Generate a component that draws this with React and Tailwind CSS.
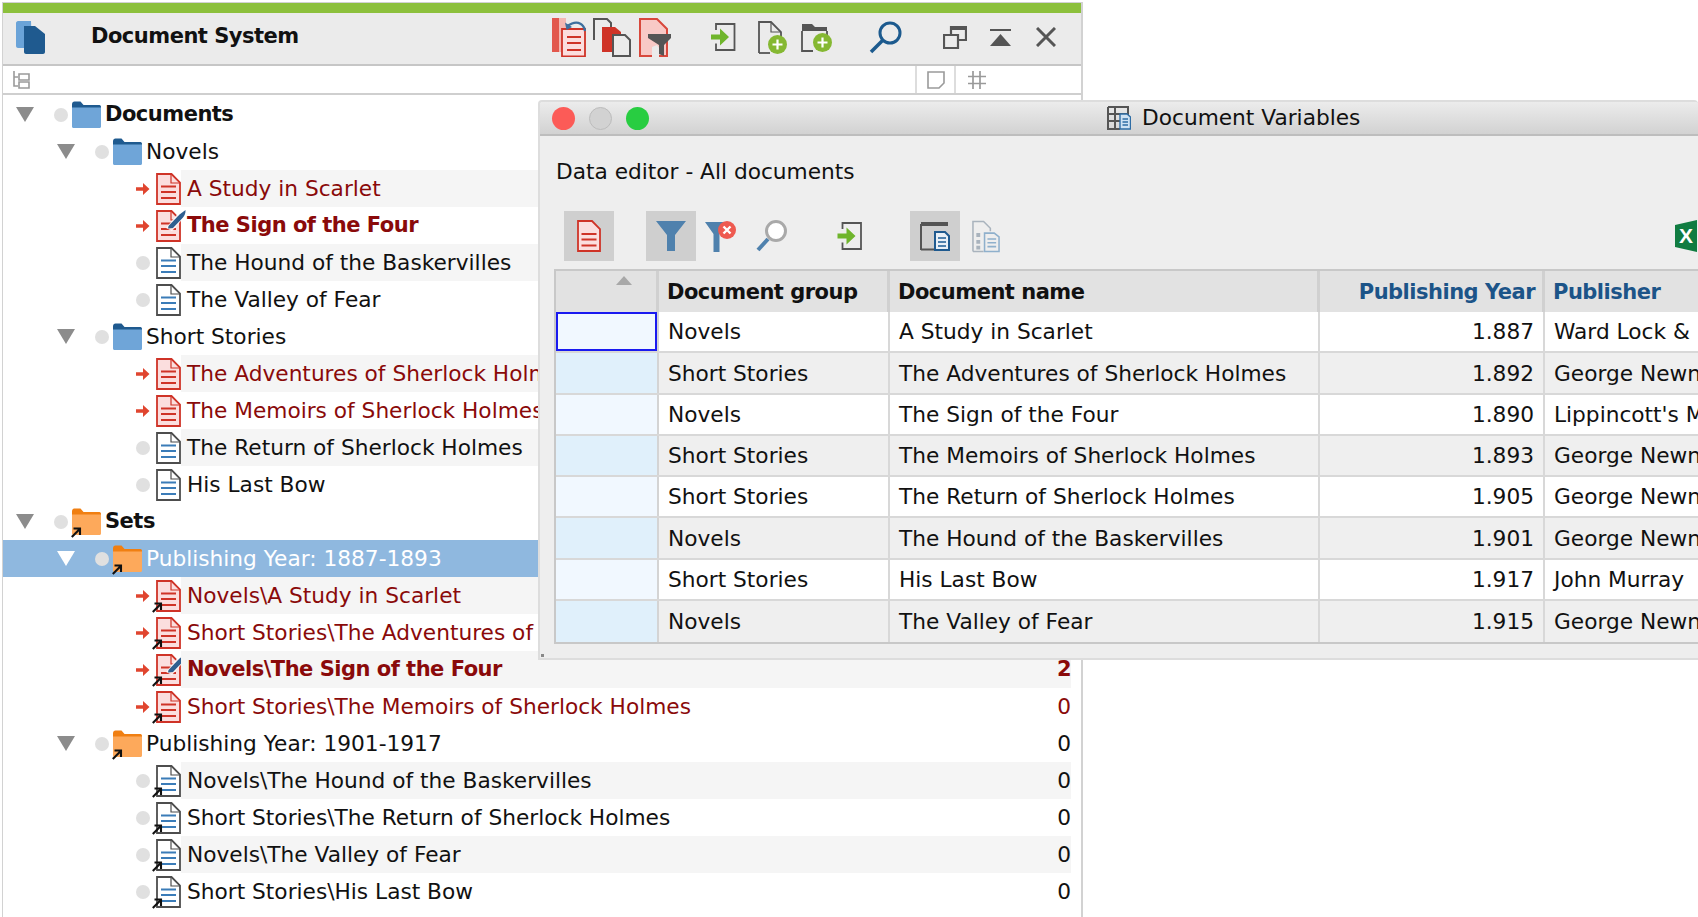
import React from "react";

const RED = "#cf3327";
const DRK = "#4d4d4d";
const BLU = "#3b7cb8";
const BOLD = "font-bold text-[21px] tracking-[-0.5px]";

function Tri({ white }) {
  return (
    <svg width="18" height="15" viewBox="0 0 18 15" className="shrink-0 block">
      <path d="M0 0H18L9 15Z" fill={white ? "#ffffff" : "#8c8c8c"} />
    </svg>
  );
}
function Dot() {
  return <span className="block shrink-0 w-[14px] h-[14px] rounded-full bg-[#e0e0e0]" />;
}
function RedArrow() {
  return (
    <svg width="14" height="14" viewBox="0 0 14 14" className="block shrink-0">
      <path d="M0 5.2H7V1L13.5 7L7 13V8.8H0Z" fill="#e0452f" />
    </svg>
  );
}
function Shortcut({ x, y }) {
  return (
    <g transform={`translate(${x} ${y})`}>
      <path d="M0.8 10L8.5 2.2M2.5 1.5H9V8" fill="none" stroke="#111" strokeWidth="2.1" />
    </g>
  );
}
function Folder({ orange, link }) {
  const body = orange ? "#fda95b" : "#6fa5d8";
  const tab = orange ? "#f07f12" : "#1f5a8f";
  return (
    <svg width="29" height="27" viewBox="0 0 29 27" className="block shrink-0 overflow-visible">
      <path d="M0 3.5C0 1.5 1 0.5 2.5 0.5H8.5L11.5 4H27.5C28.5 4 29 5 29 6V8H0Z" fill={tab} />
      <path d="M0 6.5H29V25.5C29 26.3 28.4 27 27.5 27H1.5C0.6 27 0 26.3 0 25.5Z" fill={body} />
      {link && <Shortcut x={-1} y={19} />}
    </svg>
  );
}
function Doc({ red, edit, link }) {
  const st = red ? RED : DRK;
  const fill = red ? "#fbdede" : "#ffffff";
  const ln = red ? RED : BLU;
  return (
    <svg width="25" height="32" viewBox="0 0 25 32" className="block shrink-0 overflow-visible">
      <path d="M1 1H15.5L24 9.5V31H1Z" fill={fill} stroke={st} strokeWidth="1.8" />
      <path d="M15 1V10H24" fill="none" stroke={st} strokeWidth="1.2" />
      <path d="M5 13.5H20M5 19H20M5 25H20" stroke={ln} strokeWidth="2" />
      {edit && (
        <>
          <path d="M10 18L24 1L32 3L16 21Z" fill="#fff" opacity="0.85" />
          <path d="M12.5 16L23.5 4.5C25.5 2.8 27.5 1.5 29.5 0C29.8 3 28.5 5.5 27 7.5L17 18L12 18.5Z" fill="#2f5f8f" />
        </>
      )}
      {link && <Shortcut x={-4} y={22} />}
    </svg>
  );
}

const rows = [
  { k: "folder", l: 0, t: "Documents", b: 1 },
  { k: "folder", l: 1, t: "Novels" },
  { k: "doc", t: "A Study in Scarlet", red: 1, g: 1 },
  { k: "doc", t: "The Sign of the Four", red: 1, b: 1, edit: 1 },
  { k: "doc", t: "The Hound of the Baskervilles", g: 1 },
  { k: "doc", t: "The Valley of Fear" },
  { k: "folder", l: 1, t: "Short Stories" },
  { k: "doc", t: "The Adventures of Sherlock Holmes", red: 1, g: 1 },
  { k: "doc", t: "The Memoirs of Sherlock Holmes", red: 1 },
  { k: "doc", t: "The Return of Sherlock Holmes", g: 1 },
  { k: "doc", t: "His Last Bow" },
  { k: "folder", l: 0, t: "Sets", b: 1, orange: 1 },
  { k: "folder", l: 1, t: "Publishing Year: 1887-1893", orange: 1, sel: 1 },
  { k: "doc", t: "Novels\\A Study in Scarlet", red: 1, g: 1, link: 1 },
  { k: "doc", t: "Short Stories\\The Adventures of Sherlock Holmes", red: 1, link: 1 },
  { k: "doc", t: "Novels\\The Sign of the Four", red: 1, g: 1, b: 1, edit: 1, link: 1, n: "2" },
  { k: "doc", t: "Short Stories\\The Memoirs of Sherlock Holmes", red: 1, link: 1, n: "0" },
  { k: "folder", l: 1, t: "Publishing Year: 1901-1917", orange: 1, n: "0" },
  { k: "doc", t: "Novels\\The Hound of the Baskervilles", g: 1, link: 1, n: "0" },
  { k: "doc", t: "Short Stories\\The Return of Sherlock Holmes", link: 1, n: "0" },
  { k: "doc", t: "Novels\\The Valley of Fear", g: 1, link: 1, n: "0" },
  { k: "doc", t: "Short Stories\\His Last Bow", link: 1, n: "0" },
];

function TreeRow({ r }) {
  const color = r.sel ? "text-white" : r.red ? "text-[#8a0a0a]" : "text-[#111]";
  const weight = r.b ? BOLD : "font-normal";
  if (r.k === "folder") {
    return (
      <div className={`h-[37px] flex items-center pr-[10px] ${r.sel ? "bg-[#8fb8df]" : ""}`}>
        <div className={`shrink-0 flex items-center ${r.l === 0 ? "pl-[13px]" : "pl-[54px]"}`}>
          <Tri white={r.sel} />
          <span className="w-[20px] shrink-0" />
          <Dot />
          <span className="w-[4px] shrink-0" />
          <Folder orange={r.orange} link={r.orange} />
          <span className="w-[4px] shrink-0" />
        </div>
        <span className={`${color} ${weight} whitespace-nowrap flex-1 pt-[1px]`}>{r.t}</span>
        {r.n && <span className={`${color} ${weight} pt-[1px]`}>{r.n}</span>}
      </div>
    );
  }
  return (
    <div className="h-[37px] flex items-center pr-[10px]">
      <div className="w-[178px] shrink-0 flex items-center pl-[133px]">
        <span className="w-[14px] shrink-0 block">{r.red ? <RedArrow /> : <Dot />}</span>
        <span className="w-[6px] shrink-0" />
        <Doc red={r.red} edit={r.edit} link={r.link} />
      </div>
      <div className={`flex-1 h-full flex items-center pl-[6px] ${r.g ? "bg-[#f5f5f5]" : ""}`}>
        <span className={`${color} ${weight} whitespace-nowrap flex-1 pt-[1px]`}>{r.t}</span>
        {r.n && <span className={`${color} ${weight} pt-[1px]`}>{r.n}</span>}
      </div>
    </div>
  );
}

function Plus({ cx, cy }) {
  return (
    <g>
      <circle cx={cx} cy={cy} r="9.5" fill="#85b832" />
      <path d={`M${cx - 5} ${cy}H${cx + 5}M${cx} ${cy - 5}V${cy + 5}`} stroke="#fff" strokeWidth="2.2" />
    </g>
  );
}
function ExportIcon({ w, h }) {
  return (
    <svg width={w} height={h} viewBox="0 0 25 28" className="block shrink-0">
      <path d="M5 7V1H23.5V27H5V20.5" fill="none" stroke="#555" strokeWidth="1.8" />
      <path d="M0 11.5H9V5.5L18 14L9 22.5V16.5H0Z" fill="#6fb52c" />
    </svg>
  );
}

function MainToolbar() {
  return (
    <div className="flex items-center">
      <svg width="34" height="39" viewBox="0 0 34 39" className="block shrink-0">
        <rect x="0" y="0" width="7" height="34" fill="#e2574c" />
        <path d="M7 0H14V34H7Z" fill="#f3b8b2" />
        <path d="M10 11H33V38.5H10Z" fill="#fbdede" stroke={RED} strokeWidth="1.8" />
        <path d="M15 19H29M15 25H29M15 32H29" stroke={RED} strokeWidth="2.2" />
        <path d="M33 13C32 6 26 3 20 5.5L15 8" fill="none" stroke="#3d6f9e" strokeWidth="2.4" />
        <path d="M13 4.5L14.5 12L20 9Z" fill="#3d6f9e" />
      </svg>
      <svg width="38" height="39" viewBox="0 0 38 39" className="block shrink-0 ml-[7px]">
        <path d="M1 22V1H14L18 5V9" fill="#ebebeb" stroke="#555" strokeWidth="2" />
        <path d="M9 9H22L28 14V34H9Z" fill={RED} />
        <path d="M20 17H32L37 22V38H20Z" fill="#ebebeb" stroke="#555" strokeWidth="2" />
      </svg>
      <svg width="32" height="39" viewBox="0 0 32 39" className="block shrink-0 ml-[8px]">
        <path d="M1 1H18L28 11V38H1Z" fill="#f8c9c6" stroke="#d8483c" strokeWidth="2" />
        <path d="M13 29L18 27L20 30V39H13Z" fill="#ebebeb" />
        <path d="M9 16H32V20L25 27V38L20 36V27L9 20Z" fill="#555" />
      </svg>
      <span className="ml-[40px] block"><ExportIcon w={25} h={28} /></span>
      <svg width="29" height="33" viewBox="0 0 29 33" className="block shrink-0 ml-[22px]">
        <path d="M1 32V1H13L23 11V17" fill="none" stroke="#555" strokeWidth="1.8" />
        <path d="M1 32H12" stroke="#555" strokeWidth="1.8" />
        <path d="M13 1V11H23" fill="none" stroke="#555" strokeWidth="1.2" />
        <Plus cx={19.5} cy={23.5} />
      </svg>
      <svg width="31" height="29" viewBox="0 0 31 29" className="block shrink-0 ml-[14px]">
        <path d="M1 1H11L14 4H26V8H1Z" fill="#555" />
        <path d="M1 8V28H12M26 8V14" fill="none" stroke="#555" strokeWidth="1.8" />
        <Plus cx={21.5} cy={19.5} />
      </svg>
      <svg width="33" height="33" viewBox="0 0 33 33" className="block shrink-0 ml-[37px]">
        <circle cx="21" cy="12" r="10" fill="none" stroke="#1c5a8e" strokeWidth="3" />
        <path d="M13.5 19.5L2 31" stroke="#1c5a8e" strokeWidth="3.6" />
      </svg>
      <svg width="24" height="23" viewBox="0 0 24 23" className="block shrink-0 ml-[41px]">
        <path d="M1 9H15V22H1Z" fill="none" stroke="#555" strokeWidth="2.2" />
        <path d="M8 8V1H23V14H16" fill="none" stroke="#555" strokeWidth="2.2" />
        <path d="M8 1H23V4H8Z" fill="#555" />
      </svg>
      <svg width="21" height="17" viewBox="0 0 21 17" className="block shrink-0 ml-[23px]">
        <path d="M0 1H21" stroke="#555" strokeWidth="2" />
        <path d="M10.5 5L21 17H0Z" fill="#555" />
      </svg>
      <svg width="20" height="20" viewBox="0 0 20 20" className="block shrink-0 ml-[25px]">
        <path d="M1 1L19 19M19 1L1 19" stroke="#555" strokeWidth="3" />
      </svg>
    </div>
  );
}

const tableRows = [
  ["Novels", "A Study in Scarlet", "1.887", "Ward Lock &"],
  ["Short Stories", "The Adventures of Sherlock Holmes", "1.892", "George Newnes"],
  ["Novels", "The Sign of the Four", "1.890", "Lippincott's Monthly"],
  ["Short Stories", "The Memoirs of Sherlock Holmes", "1.893", "George Newnes"],
  ["Short Stories", "The Return of Sherlock Holmes", "1.905", "George Newnes"],
  ["Novels", "The Hound of the Baskervilles", "1.901", "George Newnes"],
  ["Short Stories", "His Last Bow", "1.917", "John Murray"],
  ["Novels", "The Valley of Fear", "1.915", "George Newnes"],
];

function DataTable() {
  return (
    <div className="ml-[14px] mt-[8px] border-l-2 border-t-2 border-b-2 border-[#c8c8c8] text-[#111]">
      <div className={`h-[41px] flex bg-[#e2e2e2] ${BOLD}`}>
        <div className="w-[103px] shrink-0 border-r-[3px] border-[#d0d0d0] flex justify-end pr-[24px] pt-[5px]">
          <svg width="16" height="9" viewBox="0 0 16 9" className="block">
            <path d="M8 0L16 9H0Z" fill="#a8a8a8" />
          </svg>
        </div>
        <div className="w-[231px] shrink-0 border-r-[3px] border-[#d0d0d0] flex items-center pl-[8px] pt-[2px]">Document group</div>
        <div className="w-[430px] shrink-0 border-r-[3px] border-[#d0d0d0] flex items-center pl-[8px] pt-[2px]">Document name</div>
        <div className="w-[225px] shrink-0 border-r-[3px] border-[#d0d0d0] flex items-center justify-end pr-[7px] pt-[2px] text-[#1c5488]">Publishing Year</div>
        <div className="flex-1 flex items-center pl-[8px] pt-[2px] text-[#1c5488]">Publisher</div>
      </div>
      {tableRows.map((r, i) => (
        <div key={i} className={`h-[41.25px] flex border-b-2 last:border-b-0 border-[#d8d8d8] ${i % 2 ? "bg-[#efefef]" : "bg-white"}`}>
          <div className={`w-[103px] shrink-0 border-r-2 border-[#d4d4d4] ${i % 2 ? "bg-[#e0f0fb]" : "bg-[#f1f8ff]"}`}>
            {i === 0 && <div className="h-full border-2 border-[#1a1af0]" />}
          </div>
          <div className="w-[231px] shrink-0 border-r-2 border-[#d8d8d8] flex items-center pl-[9px] pt-[2px] whitespace-nowrap">{r[0]}</div>
          <div className="w-[430px] shrink-0 border-r-2 border-[#d8d8d8] flex items-center pl-[9px] pt-[2px] whitespace-nowrap">{r[1]}</div>
          <div className="w-[225px] shrink-0 border-r-2 border-[#d8d8d8] flex items-center justify-end pr-[9px] pt-[2px]">{r[2]}</div>
          <div className="flex-1 flex items-center pl-[9px] pt-[2px] whitespace-nowrap">{r[3]}</div>
        </div>
      ))}
    </div>
  );
}

function Dialog() {
  return (
    <div className="absolute left-[538px] top-[100px] right-0 h-[560px] overflow-hidden bg-[#eeeeee] border-2 border-r-0 border-[#dddddd] rounded-t-[4px] flex flex-col">
      <div className="relative h-[34px] shrink-0 flex items-center border-b-2 border-[#bdbdbd] bg-gradient-to-b from-[#ececec] to-[#d2d2d2] pl-[12px]">
        <span className="w-[23px] h-[23px] rounded-full bg-[#fc5b57]" />
        <span className="ml-[14px] w-[23px] h-[23px] rounded-full bg-[#d2d2d2] border border-[#bcbcbc]" />
        <span className="ml-[14px] w-[23px] h-[23px] rounded-full bg-[#28cd41]" />
        <svg width="24" height="24" viewBox="0 0 24 24" className="block ml-[458px]">
          <path d="M1 1H21V9M1 1V23H13M1 8H21M1 15H13M8 1V23" fill="none" stroke="#555" strokeWidth="2" />
          <path d="M13 8H20L23.5 11V23H13Z" fill="#cfe2f3" stroke="#2f6da5" strokeWidth="1.4" />
          <path d="M15.5 13H21M15.5 16H21M15.5 19H21" stroke="#2f6da5" strokeWidth="1.3" />
        </svg>
        <span className="ml-[11px] text-[#111] whitespace-nowrap">Document Variables</span>
      </div>
      <div className="ml-[16px] mt-[21px] leading-[30px] text-[#111] whitespace-nowrap">Data editor - All documents</div>
      <div className="mt-[24px] ml-[24px] h-[50px] flex items-center shrink-0">
        <div className="w-[50px] h-[50px] shrink-0 bg-[#cfcfcf] flex items-center justify-center">
          <svg width="24" height="32" viewBox="0 0 24 32" className="block">
            <path d="M1 1H15L23 9V31H1Z" fill="#fbdede" stroke={RED} strokeWidth="1.8" />
            <path d="M4.5 14H19.5M4.5 19.5H19.5M4.5 25.5H19.5" stroke={RED} strokeWidth="2" />
          </svg>
        </div>
        <div className="ml-[32px] w-[50px] h-[50px] shrink-0 bg-[#cfcfcf] flex items-center justify-center">
          <svg width="30" height="30" viewBox="0 0 30 30" className="block">
            <path d="M0 0H30L19 14V30H11V14Z" fill="#4f81ad" />
          </svg>
        </div>
        <svg width="32" height="32" viewBox="0 0 32 32" className="block shrink-0 ml-[9px]">
          <path d="M0 2H23L14.5 14V32H8.5V14Z" fill="#4f81ad" />
          <circle cx="22" cy="10" r="9" fill="#ee5a50" />
          <path d="M18.5 6.5L25.5 13.5M25.5 6.5L18.5 13.5" stroke="#fff" strokeWidth="2.4" />
        </svg>
        <svg width="31" height="32" viewBox="0 0 31 32" className="block shrink-0 ml-[19px]">
          <path d="M12 19L2 30" stroke="#4f81ad" strokeWidth="4" />
          <circle cx="20" cy="11" r="9.5" fill="#fff" stroke="#a9a9a9" strokeWidth="3" />
        </svg>
        <span className="ml-[50px] block"><ExportIcon w={26} h={28} /></span>
        <div className="ml-[47px] w-[50px] h-[50px] shrink-0 bg-[#cfcfcf] flex items-center justify-center">
          <svg width="30" height="30" viewBox="0 0 30 30" className="block">
            <path d="M1 29V4H28" fill="none" stroke="#555" strokeWidth="2" />
            <path d="M1 1H28V5H1Z" fill="#555" />
            <path d="M1 28.5H15" stroke="#555" strokeWidth="2" />
            <path d="M15 11H25L29 15V29H15Z" fill="#e9f0f7" stroke="#1f5a8f" strokeWidth="2" />
            <path d="M18 17H26M18 21H26M18 25H26" stroke="#4f81ad" strokeWidth="1.8" />
          </svg>
        </div>
        <svg width="28" height="33" viewBox="0 0 29 33" className="block shrink-0 ml-[12px]">
          <path d="M1 32V1H12L19 8V11M1 32H12" fill="none" stroke="#a9b3bd" strokeWidth="1.6" />
          <path d="M4.5 13H8.5V17H4.5ZM4.5 20H8.5V24H4.5ZM4.5 26H8.5V30H4.5Z" fill="#a9b3bd" />
          <path d="M13 13H23L28 17V32H13Z" fill="none" stroke="#8fb0cc" strokeWidth="1.6" />
          <path d="M16 19H25M16 23H25M16 27H25" stroke="#8fb0cc" strokeWidth="1.6" />
        </svg>
        <svg width="34" height="32" viewBox="0 0 34 32" className="block shrink-0 ml-[675px]">
          <path d="M0 5L22 0V32L0 27Z" fill="#107c41" />
          <text x="4" y="23" fill="#fff" fontSize="21" fontWeight="700" fontFamily="'Liberation Sans',sans-serif">X</text>
        </svg>
      </div>
      <DataTable />
      <span className="absolute left-[1px] bottom-[1px] w-[3px] h-[3px] bg-[#888]" />
    </div>
  );
}

export default function App() {
  return (
    <div className="relative w-[1698px] h-[917px] overflow-hidden bg-white text-[21.7px] [font-family:'DejaVu_Sans',sans-serif]">
      <div className="ml-[2px] mt-[2px] w-[1081px] h-[915px] border-l border-r-2 border-t border-[#d2d2d2] flex flex-col">
        <div className="h-[10px] shrink-0 bg-[#8cc03c]" />
        <div className="h-[53px] shrink-0 bg-[#ebebeb] border-b-2 border-[#c6c6c6] flex items-center pb-[3px]">
          <svg width="29" height="33" viewBox="0 0 29 33" className="block shrink-0 ml-[13px]">
            <path d="M0 2C0 1 1 0 2 0H15L16 27H2C1 27 0 26 0 25Z" fill="#6aa3d8" />
            <path d="M8 5H19L29 13V31C29 32 28 33 27 33H10C9 33 8 32 8 31Z" fill="#1f5a8f" />
          </svg>
          <span className="w-[46px] shrink-0" />
          <span className={`${BOLD} text-[#111] w-[461px] shrink-0 whitespace-nowrap`}>Document System</span>
          <MainToolbar />
        </div>
        <div className="h-[29px] shrink-0 border-b-2 border-[#cfcfcf] flex items-center">
          <svg width="17" height="18" viewBox="0 0 17 18" className="block shrink-0 ml-[10px]">
            <path d="M1 0V15H5M1 6H5M6 3H16V9H6ZM6 11H16V17H6Z" fill="none" stroke="#9a9a9a" strokeWidth="1.6" />
          </svg>
          <span className="w-[885px] shrink-0" />
          <div className="w-[41px] h-full shrink-0 border-x-2 border-[#dddddd] flex items-center justify-center">
            <svg width="18" height="18" viewBox="0 0 18 18" className="block">
              <path d="M1 1H17V12L12 17H1Z" fill="none" stroke="#9a9a9a" strokeWidth="1.6" />
            </svg>
          </div>
          <svg width="18" height="18" viewBox="0 0 18 18" className="block shrink-0 ml-[12px]">
            <path d="M5 0V18M12 0V18M0 5.5H18M0 12.5H18" stroke="#9a9a9a" strokeWidth="1.7" />
          </svg>
        </div>
        <div className="overflow-hidden pt-[1px]">
          {rows.map((r, i) => (
            <TreeRow key={i} r={r} />
          ))}
        </div>
      </div>
      <Dialog />
    </div>
  );
}
